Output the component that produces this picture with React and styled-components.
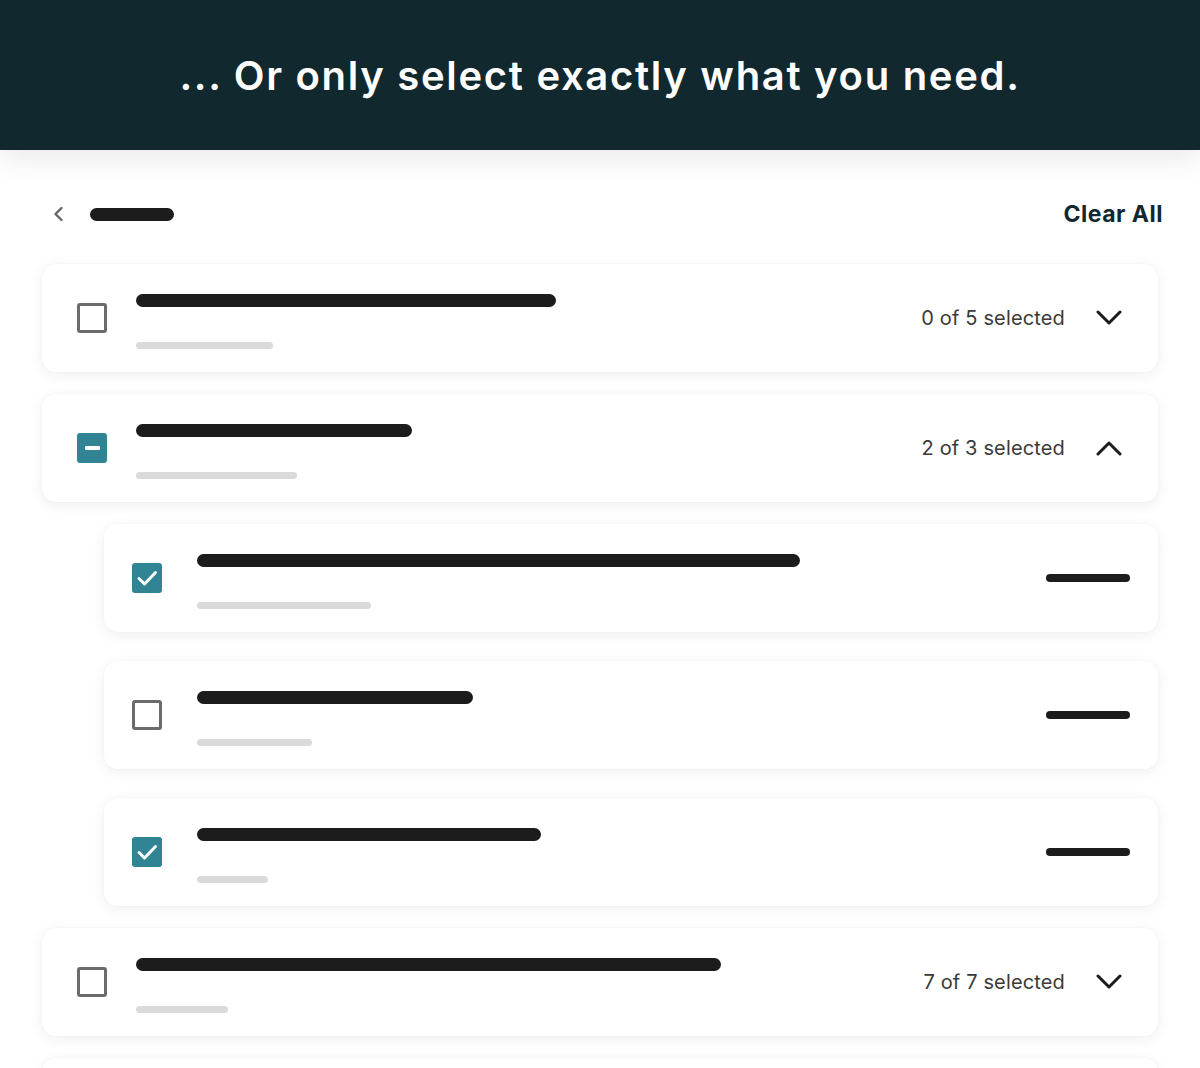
import React from "react";
import styled, { createGlobalStyle } from "styled-components";

const Global = createGlobalStyle`
  html, body { margin: 0; padding: 0; background: #ffffff; }
  body { font-family: Inter, "Noto Sans", sans-serif; -webkit-font-smoothing: antialiased; overflow: hidden; }
  * { box-sizing: border-box; }
`;

const Page = styled.div`
  width: 1200px;
  height: 1068px;
  overflow: hidden;
  background: #fff;
`;

const Header = styled.header`
  position: relative;
  z-index: 1;
  height: 150px;
  background: #11282f;
  display: flex;
  align-items: center;
  justify-content: center;
  box-shadow: 0 8px 28px rgba(0, 0, 0, 0.09);
`;

const Title = styled.h1`
  margin: 0;
  color: #ffffff;
  font-size: 40px;
  font-weight: 600;
  letter-spacing: 1.7px;
  line-height: 1;
  padding-top: 2px;
`;

const Content = styled.main`
  padding: 40px 42px 0 42px;
`;

const NavRow = styled.div`
  height: 48px;
  display: flex;
  align-items: center;
  justify-content: space-between;
  padding-left: 10px;
  margin-right: -5px;
  margin-bottom: 26px;
`;

const NavLeft = styled.div`
  display: flex;
  align-items: center;
  gap: 26px;
`;

const BackButton = styled.span`
  display: flex;
  width: 12px;
  height: 16px;
`;

const Pill = styled.span`
  display: block;
  flex: none;
  width: ${(p) => p.$w}px;
  height: ${(p) => p.$h || 13}px;
  border-radius: 8px;
  background: ${(p) => p.$color || "#1c1c1c"};
`;

const ClearAll = styled.button`
  border: none;
  background: none;
  padding: 0;
  font-family: inherit;
  font-size: 23px;
  font-weight: 700;
  letter-spacing: 0.5px;
  color: #11282f;
  cursor: pointer;
`;

const List = styled.div`
  display: flex;
  flex-direction: column;
  gap: 22px;
`;

const SubList = styled.div`
  display: flex;
  flex-direction: column;
  gap: 29px;
  margin-left: 62px;
`;

const Card = styled.div`
  flex: none;
  height: 108px;
  background: #fff;
  border-radius: 14px;
  box-shadow: 0 3px 14px rgba(0, 0, 0, 0.07), 0 0 2px rgba(0, 0, 0, 0.03);
  display: flex;
  align-items: center;
  padding: 0 ${(p) => (p.$sub ? 28 : 36)}px 0 ${(p) => (p.$sub ? 28 : 35)}px;
`;

const Box = styled.span`
  flex: none;
  width: 30px;
  height: 30px;
  border-radius: 3px;
  display: flex;
  align-items: center;
  justify-content: center;
  background: ${(p) => (p.$on ? "#318494" : "#fff")};
  border: ${(p) => (p.$on ? "none" : "3px solid #6b6b6b")};
`;

const Minus = styled.span`
  display: block;
  width: 15px;
  height: 4px;
  background: #fff;
  border-radius: 1px;
`;

const Lines = styled.div`
  flex: 1;
  display: flex;
  flex-direction: column;
  gap: 35px;
  margin-left: ${(p) => (p.$sub ? 35 : 29)}px;
  align-self: flex-start;
  padding-top: 30px;
`;

const Meta = styled.div`
  display: flex;
  align-items: center;
  gap: 31px;
`;

const Count = styled.span`
  font-size: 20px;
  color: #3a3a3a;
  letter-spacing: 0.15px;
`;

const Chevron = ({ up }) => (
  <svg width="26" height="16" viewBox="0 0 26 16" fill="none">
    <path
      d={up ? "M2 14 L13 3 L24 14" : "M2 2 L13 13 L24 2"}
      stroke="#1c1c1c"
      strokeWidth="3"
      strokeLinecap="round"
      strokeLinejoin="round"
    />
  </svg>
);

const Check = () => (
  <svg width="30" height="30" viewBox="0 0 30 30" fill="none">
    <path d="M7 15.5 L12.5 21 L23.5 9.5" stroke="#fff" strokeWidth="3" strokeLinecap="round" strokeLinejoin="round" />
  </svg>
);

const Checkbox = ({ state }) =>
  state === "on" ? (
    <Box $on><Check /></Box>
  ) : state === "mixed" ? (
    <Box $on><Minus /></Box>
  ) : (
    <Box />
  );

const GroupCard = ({ state, title, sub, count, open }) => (
  <Card>
    <Checkbox state={state} />
    <Lines>
      <Pill $w={title} />
      <Pill $w={sub} $h={7} $color="#dadada" />
    </Lines>
    <Meta>
      {count && <Count>{count}</Count>}
      <Chevron up={open} />
    </Meta>
  </Card>
);

const ItemCard = ({ state, title, sub }) => (
  <Card $sub>
    <Checkbox state={state} />
    <Lines $sub>
      <Pill $w={title} />
      <Pill $w={sub} $h={7} $color="#dadada" />
    </Lines>
    <Pill $w={84} $h={8} />
  </Card>
);

export default function App() {
  return (
    <Page>
      <Global />
      <Header>
        <Title>... Or only select exactly what you need.</Title>
      </Header>
      <Content>
        <NavRow>
          <NavLeft>
            <BackButton>
              <svg width="12" height="16" viewBox="0 0 12 16" fill="none">
                <path d="M9.5 2 L3.5 8 L9.5 14" stroke="#666" strokeWidth="2.4" strokeLinecap="round" strokeLinejoin="round" />
              </svg>
            </BackButton>
            <Pill $w={84} />
          </NavLeft>
          <ClearAll>Clear All</ClearAll>
        </NavRow>
        <List>
          <GroupCard state="off" title={420} sub={137} count="0 of 5 selected" />
          <GroupCard state="mixed" title={276} sub={161} count="2 of 3 selected" open />
          <SubList>
            <ItemCard state="on" title={603} sub={174} />
            <ItemCard state="off" title={276} sub={115} />
            <ItemCard state="on" title={344} sub={71} />
          </SubList>
          <GroupCard state="off" title={585} sub={92} count="7 of 7 selected" />
          <GroupCard state="off" title={400} sub={120} />
        </List>
      </Content>
    </Page>
  );
}
